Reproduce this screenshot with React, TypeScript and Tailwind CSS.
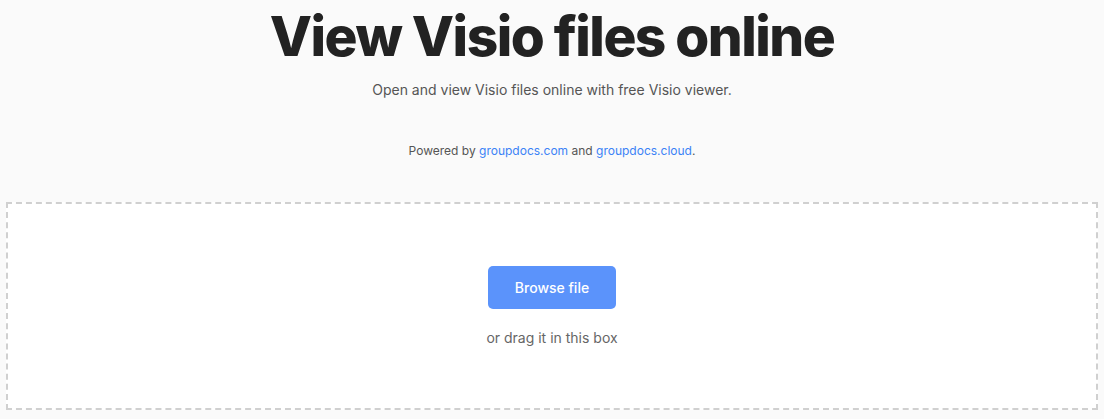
export default function App() {
  return (
    <div
      className="min-h-[419px] bg-[#fafafa] px-[6px] pb-[8px] flex flex-col items-center"
      style={{ fontFamily: "Inter, 'Noto Sans', sans-serif" }}
    >
      <h1 className="mt-[3px] text-[55px] leading-[66px] font-extrabold tracking-[-0.028em] text-[#222]">
        View Visio files online
      </h1>
      <p className="mt-[11px] text-[14px] leading-[20px] text-[#555]">
        Open and view Visio files online with free Visio viewer.
      </p>
      <p className="mt-[43px] text-[12px] leading-[16px] text-[#555]">
        Powered by{" "}
        <a href="#" className="text-[#3b82f6]">groupdocs.com</a> and{" "}
        <a href="#" className="text-[#3b82f6]">groupdocs.cloud</a>.
      </p>
      <div className="mt-[43px] w-full h-[208px] bg-white border-2 border-dashed border-[#d0d0d0] flex flex-col items-center justify-center">
        <button className="mt-[2px] w-[128px] h-[43px] rounded-[5px] bg-[#5b93fb] text-white text-[14px] font-medium">
          Browse file
        </button>
        <p className="mt-[19px] text-[14px] leading-[20px] text-[#666]">or drag it in this box</p>
      </div>
    </div>
  );
}
